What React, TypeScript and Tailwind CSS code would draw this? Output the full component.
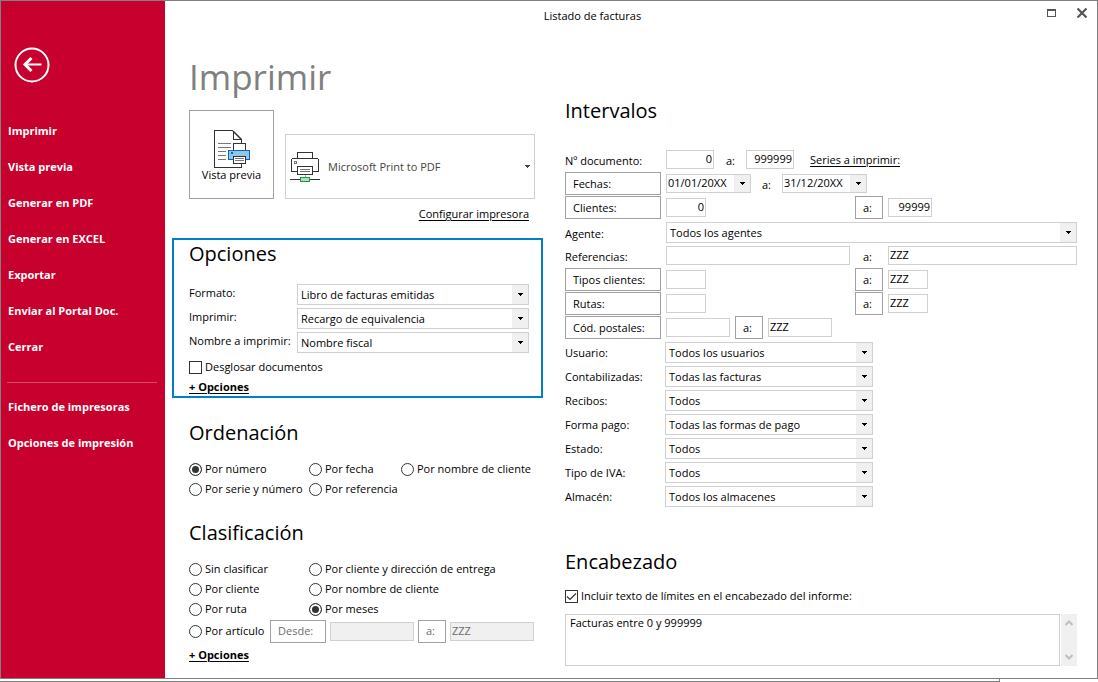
import { useState, type ReactNode } from "react";

const MENU = [
  "Imprimir",
  "Vista previa",
  "Generar en PDF",
  "Generar en EXCEL",
  "Exportar",
  "Enviar al Portal Doc.",
  "Cerrar",
];

const MENU_EXTRA = ["Fichero de impresoras", "Opciones de impresión"];

const PRINT_OPTIONS = [
  { id: "formato", label: "Formato:", value: "Libro de facturas emitidas" },
  { id: "imprimir", label: "Imprimir:", value: "Recargo de equivalencia" },
  { id: "nombre", label: "Nombre a imprimir:", value: "Nombre fiscal" },
];

const FILTERS = [
  { id: "usuario", label: "Usuario:", value: "Todos los usuarios" },
  { id: "contabilizadas", label: "Contabilizadas:", value: "Todas las facturas" },
  { id: "recibos", label: "Recibos:", value: "Todos" },
  { id: "forma-pago", label: "Forma pago:", value: "Todas las formas de pago" },
  { id: "estado", label: "Estado:", value: "Todos" },
  { id: "tipo-iva", label: "Tipo de IVA:", value: "Todos" },
  { id: "almacen", label: "Almacén:", value: "Todos los almacenes" },
];

function BackIcon() {
  return (
    <svg width="36" height="36" viewBox="0 0 36 36" fill="none" stroke="#fff">
      <circle cx="18" cy="18" r="16.5" strokeWidth="2" />
      <path d="M10 17.5h17.5" strokeWidth="2" />
      <path d="M17.5 11L11 17.5l6.5 6.5" strokeWidth="3" />
    </svg>
  );
}

function PreviewIcon() {
  return (
    <svg width="36" height="38" viewBox="0 0 36 38" fill="none" shapeRendering="crispEdges">
      <path d="M0.5 0.5h18l9 9v28h-27z" fill="#fff" stroke="#333" />
      <path d="M19.5 0.5v9h8" stroke="#333" />
      <path d="M19 1l8.5 8.5" stroke="#333" strokeWidth="1.5" shapeRendering="auto" />
      <path d="M4 13.5h13M4 17.5h13M4 21.5h8M4 25.5h8M4 29.5h8" stroke="#777" />
      <path d="M19.5 20.5v-7h12v7" fill="#fff" stroke="#333" />
      <path d="M14.5 20.5h21v9h-21z" fill="#91c5ee" stroke="#0f66b4" />
      <path d="M17 22h2v2h-2z" fill="#0f66b4" />
      <path d="M19.5 26.5h12v7h-12z" fill="#fff" stroke="#333" />
      <path d="M21 28.5h9M21 30.5h9" stroke="#777" />
    </svg>
  );
}

function PrinterIcon() {
  return (
    <svg width="30" height="30" viewBox="0 0 30 30" fill="none" shapeRendering="crispEdges">
      <path d="M7.5 6.5v-6h15v6" fill="#fff" stroke="#333" />
      <path d="M1.5 19.5v-12l1-1h25l1 1v12z" fill="#fff" stroke="#333" />
      <path d="M4.5 9.5h2v2h-2z" stroke="#777" />
      <path d="M7.5 14.5h15v8h-15z" fill="#fff" stroke="#333" />
      <path d="M10 17.5h10M10 19.5h10" stroke="#777" />
      <path d="M15 23v2" stroke="#aaa" />
      <path d="M0 27.5h30" stroke="#333" />
      <path d="M10.5 25.5h9v4h-9z" fill="#b5dfbb" stroke="#149b48" />
    </svg>
  );
}

function Arrow() {
  return (
    <svg width="5" height="3" viewBox="0 0 5 3" fill="currentColor" shapeRendering="crispEdges">
      <path d="M0 0h5v1h-5zM1 1h3v1h-3zM2 2h1v1h-1z" />
    </svg>
  );
}

interface SelectProps {
  id: string;
  value: string;
  className?: string;
  compact?: boolean;
  ariaLabel?: string;
}

function Select({ id, value, className = "", compact = false, ariaLabel }: SelectProps) {
  return (
    <div className={`relative ${className}`}>
      <select
        id={id}
        aria-label={ariaLabel}
        className={`block w-full appearance-none rounded-none border border-[#d0d0d0] bg-white pr-[18px] ${
          compact ? "h-[19px] pb-0.5 pl-px leading-[15px]" : "h-[21px] pl-[3px] leading-[19px]"
        }`}
      >
        <option>{value}</option>
      </select>
      <span className="pointer-events-none absolute inset-y-px right-px flex w-4 items-center justify-center bg-[#f0f0f0]">
        <Arrow />
      </span>
    </div>
  );
}

interface FieldProps {
  label: string;
  value?: string;
  className?: string;
  disabled?: boolean;
}

function Field({ label, value = "", className = "", disabled = false }: FieldProps) {
  return (
    <input
      type="text"
      aria-label={label}
      defaultValue={value}
      disabled={disabled}
      className={`h-[19px] min-w-0 border border-[#d0d0d0] bg-white px-px pb-0.5 leading-[15px] disabled:bg-[#f0f0f0] disabled:text-[#6d6d6d] ${className}`}
    />
  );
}

function BoxButton({ children, className = "" }: { children: ReactNode; className?: string }) {
  return (
    <button type="button" className={`h-[23px] border border-[#a0a0a0] bg-white px-[7px] text-left ${className}`}>
      {children}
    </button>
  );
}

interface RadioProps {
  name: string;
  label: string;
  checked: string;
  onSelect: (label: string) => void;
}

function Radio({ name, label, checked, onSelect }: RadioProps) {
  return (
    <label className="flex items-center gap-[3px] whitespace-nowrap">
      <input
        type="radio"
        name={name}
        checked={checked === label}
        onChange={() => onSelect(label)}
        className="size-[13px] shrink-0 appearance-none rounded-full border border-[#333] bg-white checked:bg-[#333] checked:shadow-[inset_0_0_0_2px_white]"
      />
      {label}
    </label>
  );
}

function Checkbox({ label, defaultChecked = false }: { label: string; defaultChecked?: boolean }) {
  return (
    <label className="flex items-center gap-[3px]">
      <span className="relative size-[13px] shrink-0">
        <input
          type="checkbox"
          defaultChecked={defaultChecked}
          className="peer block size-[13px] appearance-none border border-[#333] bg-white"
        />
        <svg
          className="pointer-events-none absolute inset-0 hidden peer-checked:block"
          width="13"
          height="13"
          viewBox="0 0 13 13"
          fill="none"
          stroke="#333"
        >
          <path d="M2 6.5L5 9.5l6-6" strokeWidth="1.2" />
        </svg>
      </span>
      {label}
    </label>
  );
}

function Heading({ children }: { children: ReactNode }) {
  return <h2 className="text-xl leading-7">{children}</h2>;
}

function MoreOptions() {
  return (
    <a href="#opciones" className="font-bold underline underline-offset-2">
      + Opciones
    </a>
  );
}

function MenuList({ items }: { items: string[] }) {
  return (
    <ul>
      {items.map((item) => (
        <li key={item} className="flex h-9 items-center">
          <button type="button" className="px-px">{item}</button>
        </li>
      ))}
    </ul>
  );
}

function Sidebar() {
  return (
    <aside className="w-[164px] shrink-0 bg-[#c8002d] font-bold text-white">
      <button type="button" aria-label="Volver" className="mt-[46px] ml-[13px] block">
        <BackIcon />
      </button>
      <nav className="mt-[30px] px-1.5">
        <MenuList items={MENU} />
        <hr className="mt-[17px] mr-0.5 mb-1.5 border-[#d9486a]" />
        <MenuList items={MENU_EXTRA} />
      </nav>
    </aside>
  );
}

function TitleBar() {
  return (
    <header className="flex h-[30px] items-center">
      <div className="flex-1 text-center">Listado de facturas</div>
      <div className="flex w-[77px] items-center justify-between pr-2.5 pb-1.5 pl-[27px]">
        <button type="button" aria-label="Maximizar">
          <svg width="10" height="10" viewBox="0 0 10 10" fill="none" stroke="#555" shapeRendering="crispEdges">
            <path d="M0.5 1.5h8v7h-8z" />
            <path d="M0 2h9" strokeWidth="2" />
          </svg>
        </button>
        <button type="button" aria-label="Cerrar ventana">
          <svg width="10" height="10" viewBox="0 0 10 10" fill="none" stroke="#555">
            <path d="M0.5 0.5l9 9M9.5 0.5l-9 9" strokeWidth="2.2" />
          </svg>
        </button>
      </div>
    </header>
  );
}

function PrinterPanel() {
  return (
    <section className="pr-2 pl-[17px]">
      <h1 className="pt-[22px] text-[35px] leading-[48px] text-[#808080]">Imprimir</h1>
      <div className="mt-[9px] flex items-end gap-[11px]">
        <button
          type="button"
          className="flex h-[89px] w-[85px] shrink-0 flex-col items-center border border-[#a0a0a0] pt-[19px] leading-[14px]"
        >
          <PreviewIcon />
          Vista previa
        </button>
        <div className="relative flex-1 text-[#444]">
          <span className="pointer-events-none absolute inset-y-0 left-[5px] flex items-center">
            <PrinterIcon />
          </span>
          <select
            aria-label="Impresora"
            className="block h-[65px] w-full appearance-none rounded-none border border-[#d0d0d0] bg-transparent pr-5 pl-[42px]"
          >
            <option>Microsoft Print to PDF</option>
          </select>
          <span className="pointer-events-none absolute inset-y-0 right-[5px] flex items-center">
            <Arrow />
          </span>
        </div>
      </div>
      <div className="mt-1.5 flex justify-end pr-1.5 leading-[18px]">
        <a href="#configurar" className="underline underline-offset-2">Configurar impresora</a>
      </div>
    </section>
  );
}

function OptionsPanel() {
  return (
    <section className="mt-[15px] h-40 border-2 border-[#0080c8] pr-3 pl-[15px]">
      <Heading>Opciones</Heading>
      <div className="mt-[14px]">
        {PRINT_OPTIONS.map((row) => (
          <div key={row.id} className="flex h-6 items-center">
            <label htmlFor={row.id} className="w-[108px] shrink-0 pb-0.5 whitespace-nowrap">
              {row.label}
            </label>
            <Select id={row.id} value={row.value} className="flex-1" />
          </div>
        ))}
      </div>
      <div className="mt-[3px] flex h-5 items-center">
        <Checkbox label="Desglosar documentos" />
      </div>
      <div className="flex h-5 items-center">
        <MoreOptions />
      </div>
    </section>
  );
}

function SortPanel() {
  const [order, setOrder] = useState("Por número");
  const options = ["Por número", "Por fecha", "Por nombre de cliente", "Por serie y número", "Por referencia"];

  return (
    <section className="mt-[21px] pl-[17px]">
      <Heading>Ordenación</Heading>
      <div className="mt-3 grid auto-rows-[20px] grid-cols-[120px_92px_1fr]">
        {options.map((label) => (
          <Radio key={label} name="orden" label={label} checked={order} onSelect={setOrder} />
        ))}
      </div>
    </section>
  );
}

function GroupPanel() {
  const [group, setGroup] = useState("Por meses");
  const options = [
    "Sin clasificar",
    "Por cliente y dirección de entrega",
    "Por cliente",
    "Por nombre de cliente",
    "Por ruta",
    "Por meses",
  ];

  return (
    <section className="mt-5 pl-[17px]">
      <Heading>Clasificación</Heading>
      <div className="mt-3 grid auto-rows-[20px] grid-cols-[120px_1fr]">
        {options.map((label) => (
          <Radio key={label} name="clasificacion" label={label} checked={group} onSelect={setGroup} />
        ))}
      </div>
      <div className="flex h-6 items-center gap-1">
        <div className="w-[77px]">
          <Radio name="clasificacion" label="Por artículo" checked={group} onSelect={setGroup} />
        </div>
        <BoxButton className="w-14 text-[#6d6d6d]">Desde:</BoxButton>
        <Field label="Desde artículo" disabled className="w-[84px]" />
        <BoxButton className="w-7 text-[#6d6d6d]">a:</BoxButton>
        <Field label="Hasta artículo" value="ZZZ" disabled className="w-[84px]" />
      </div>
      <div className="flex h-6 items-center">
        <MoreOptions />
      </div>
    </section>
  );
}

const ROW = "flex h-6 items-center pb-px";

// label | from | "a:" | to
const RANGE_ROW = "grid h-6 grid-cols-[96px_184px_28px_1fr] items-center gap-x-[5px] pb-px";

function RangesPanel() {
  return (
    <section>
      <Heading>Intervalos</Heading>
      <div className="mt-[23px]">
        <div className={ROW}>
          <span className="w-[101px] pt-0.5">Nº documento:</span>
          <Field label="Desde documento" value="0" className="w-12 text-right" />
          <span className="w-8 pt-0.5 pl-3">a:</span>
          <Field label="Hasta documento" value="999999" className="w-12 text-right" />
          <a href="#series" className="ml-4 underline underline-offset-2">Series a imprimir:</a>
        </div>
        <div className={ROW}>
          <BoxButton className="mr-[5px] w-24">Fechas:</BoxButton>
          <Select id="fecha-desde" ariaLabel="Desde fecha" value="01/01/20XX" compact className="w-[85px]" />
          <span className="w-[31px] pt-0.5 pl-[11px]">a:</span>
          <Select id="fecha-hasta" ariaLabel="Hasta fecha" value="31/12/20XX" compact className="w-[85px]" />
        </div>
        <div className={RANGE_ROW}>
          <BoxButton>Clientes:</BoxButton>
          <Field label="Desde cliente" value="0" className="w-10 text-right" />
          <BoxButton>a:</BoxButton>
          <Field label="Hasta cliente" value="99999" className="w-11 text-right" />
        </div>
        <div className="flex h-6 items-center">
          <label htmlFor="agente" className="w-[101px] pt-1">Agente:</label>
          <Select id="agente" value="Todos los agentes" className="flex-1" />
        </div>
        <div className={RANGE_ROW}>
          <span className="pt-0.5">Referencias:</span>
          <Field label="Desde referencia" />
          <span className="pt-0.5 pl-2">a:</span>
          <Field label="Hasta referencia" value="ZZZ" />
        </div>
        <div className={RANGE_ROW}>
          <BoxButton>Tipos clientes:</BoxButton>
          <Field label="Desde tipo de cliente" className="w-10" />
          <BoxButton>a:</BoxButton>
          <Field label="Hasta tipo de cliente" value="ZZZ" className="w-10" />
        </div>
        <div className={RANGE_ROW}>
          <BoxButton>Rutas:</BoxButton>
          <Field label="Desde ruta" className="w-10" />
          <BoxButton>a:</BoxButton>
          <Field label="Hasta ruta" value="ZZZ" className="w-10" />
        </div>
        <div className={`${ROW} gap-[5px]`}>
          <BoxButton className="w-24">Cód. postales:</BoxButton>
          <Field label="Desde código postal" className="w-16" />
          <BoxButton className="w-7">a:</BoxButton>
          <Field label="Hasta código postal" value="ZZZ" className="w-16" />
        </div>
        {FILTERS.map((row) => (
          <div key={row.id} className="flex h-6 items-center">
            <label htmlFor={row.id} className="w-[100px] pt-0.5">{row.label}</label>
            <Select id={row.id} value={row.value} className="w-[208px]" />
          </div>
        ))}
      </div>
    </section>
  );
}

function HeaderTextPanel() {
  return (
    <section className="mt-10">
      <Heading>Encabezado</Heading>
      <div className="mt-2.5 flex h-5 items-center">
        <Checkbox label="Incluir texto de límites en el encabezado del informe:" defaultChecked />
      </div>
      <div className="mt-2 flex gap-px">
        <textarea
          aria-label="Texto del encabezado"
          defaultValue="Facturas entre 0 y 999999"
          className="block h-[52px] flex-1 resize-none overflow-hidden border border-[#d0d0d0] px-1 leading-4"
        />
        <div className="flex w-4 flex-col items-center justify-between bg-[#f0f0f0] py-1.5 text-[#bfbfbf]">
          <svg width="8" height="6" viewBox="0 0 8 6" fill="none" stroke="currentColor" strokeWidth="2">
            <path d="M0.5 5L4 1.5 7.5 5" />
          </svg>
          <svg width="8" height="6" viewBox="0 0 8 6" fill="none" stroke="currentColor" strokeWidth="2">
            <path d="M0.5 1L4 4.5 7.5 1" />
          </svg>
        </div>
      </div>
    </section>
  );
}

export default function App() {
  return (
    <div className="flex min-h-screen flex-col bg-white font-['Open_Sans','Noto_Sans',sans-serif] text-[11px] leading-4 text-black">
      <div className="flex flex-1 border border-[#808080]">
        <Sidebar />
        <main className="min-w-0 flex-1">
          <TitleBar />
          <div className="grid grid-cols-[371px_1fr] gap-[22px] pr-5 pl-[7px]">
            <div>
              <PrinterPanel />
              <OptionsPanel />
              <SortPanel />
              <GroupPanel />
            </div>
            <div className="pt-[66px]">
              <RangesPanel />
              <HeaderTextPanel />
            </div>
          </div>
        </main>
      </div>
      <div className="mr-[98px] h-[3px] border-r border-b border-[#808080]" />
    </div>
  );
}
